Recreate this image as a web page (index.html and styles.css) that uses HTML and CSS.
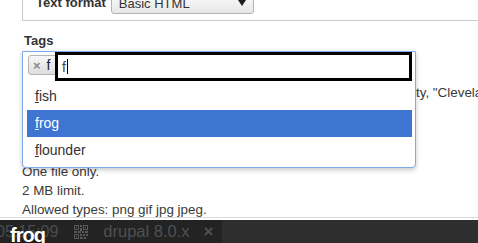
FILE: index.html
```html
<!DOCTYPE html>
<html>
<head>
<meta charset="utf-8">
<link rel="stylesheet" href="styles.css">
</head>
<body>
<div class="page">
  <div class="format">
    <span class="format-label">Text format</span>
    <div class="select"><span class="select-text">Basic HTML</span><span class="select-arrow"></span></div>
  </div>
  <div class="tags-label">Tags</div>
  <div class="widget">
    <div class="chip"><span class="chip-x">×</span><span class="chip-t">f</span></div>
    <div class="input"><span>f</span><span class="caret"></span></div>
    <ul class="suggest">
      <li><u>f</u>ish</li>
      <li class="active"><u>f</u>rog</li>
      <li><u>f</u>lounder</li>
    </ul>
  </div>
  <div class="desc"><span class="desc-hidden">Enter a comma-separated list. For example: Amsterdam, Mexico Ci</span>ty, "Cleveland, Ohio"</div>
  <div class="file-help">
    <div>One file only.</div>
    <div>2 MB limit.</div>
    <div>Allowed types: png gif jpg jpeg.</div>
  </div>
  <div class="sep"></div>
</div>
<div class="taskbar">
  <div class="tab">
    <span class="time">05:15:09</span>
    <svg class="qr" width="14" height="14" viewBox="0 0 14 14">
      <g fill="#595959">
        <rect x="0" y="0" width="5" height="5"/><rect x="9" y="0" width="5" height="5"/><rect x="0" y="9" width="5" height="5"/>
        <rect x="6" y="0" width="2" height="2"/><rect x="6" y="3" width="2" height="3"/><rect x="0" y="6" width="3" height="2"/>
        <rect x="4" y="6" width="3" height="2"/><rect x="8" y="6" width="2" height="2"/><rect x="11" y="6" width="3" height="2"/>
        <rect x="6" y="9" width="2" height="2"/><rect x="9" y="9" width="2" height="2"/><rect x="12" y="9" width="2" height="2"/>
        <rect x="6" y="12" width="3" height="2"/><rect x="10" y="12" width="2" height="2"/>
      </g>
      <g fill="#232323">
        <rect x="1" y="1" width="3" height="3"/><rect x="10" y="1" width="3" height="3"/><rect x="1" y="10" width="3" height="3"/>
      </g>
      <g fill="#595959">
        <rect x="2" y="2" width="1" height="1"/><rect x="11" y="2" width="1" height="1"/><rect x="2" y="11" width="1" height="1"/>
      </g>
    </svg>
    <span class="proj">drupal 8.0.x</span>
    <span class="close">×</span>
  </div>
  <div class="rest"></div>
</div>
<div class="drag">frog</div>
</body>
</html>
```

FILE: styles.css
```css
html, body {
  margin: 0;
  padding: 0;
}
body {
  font-family: "Liberation Sans", Arial, sans-serif;
  color: #333;
  background: #fff;
  width: 478px;
  height: 243px;
  overflow: hidden;
  position: relative;
}
.format {
  margin-left: 22px;
  height: 21px;
  box-sizing: border-box;
  border-left: 1px solid #ccc;
  border-bottom: 1px solid #ccc;
  display: flex;
  align-items: flex-end;
  padding: 0 0 6px 13px;
  gap: 5px;
}
.format-label {
  font-size: 13px;
  font-weight: bold;
  line-height: 15px;
  margin-bottom: 4px;
  color: #333;
}
.select {
  width: 143px;
  height: 22px;
  box-sizing: border-box;
  border: 1px solid #b3b3b3;
  border-radius: 0 0 3px 3px;
  background: linear-gradient(#fefefe, #e6e6e6);
  display: flex;
  align-items: flex-end;
  justify-content: space-between;
  padding: 0 7px 2px 7px;
}
.select-text {
  font-size: 13px;
  line-height: 15px;
  color: #333;
}
.select-arrow {
  width: 0;
  height: 0;
  border-left: 4px solid transparent;
  border-right: 4px solid transparent;
  border-top: 6px solid #1e1e1e;
  margin-bottom: 5px;
}
.tags-label {
  font-size: 13px;
  font-weight: bold;
  line-height: 16px;
  margin: 12px 0 2px 24px;
  color: #333;
}
.widget {
  margin-left: 22px;
  width: 394px;
  height: 30px;
  position: relative;
  display: flex;
  align-items: flex-start;
}
.chip {
  position: relative;
  z-index: 2;
  margin: 4px -3px 0 6px;
  width: 30px;
  height: 20px;
  box-sizing: border-box;
  border: 1px solid #b5b5b5;
  border-radius: 3px;
  background: linear-gradient(#f6f6f6, #dedede);
  display: flex;
  align-items: center;
  padding-left: 4px;
  gap: 6px;
}
.chip-x {
  font-size: 13px;
  font-weight: bold;
  color: #8a8a8a;
}
.chip-t {
  font-size: 14px;
  color: #1c1c30;
}
.input {
  position: relative;
  z-index: 2;
  margin-top: 1px;
  width: 357px;
  height: 29px;
  box-sizing: border-box;
  border: 3px solid #000;
  background: #fff;
  display: flex;
  align-items: center;
  padding-left: 4px;
  font-size: 14px;
  color: #444;
}
.caret {
  width: 1px;
  height: 15px;
  background: #000;
  margin-left: 1px;
}
.suggest {
  position: absolute;
  z-index: 1;
  left: 0;
  top: 0;
  width: 394px;
  height: 117px;
  box-sizing: border-box;
  margin: 0;
  padding: 31px 3px 0 4px;
  list-style: none;
  background: #fff;
  border: 1px solid #7ea9ec;
  border-radius: 0 0 4px 4px;
  box-shadow: 0 2px 5px rgba(0, 0, 0, 0.22);
}
.suggest li {
  height: 27px;
  line-height: 27px;
  padding-left: 8px;
  font-size: 14px;
  color: #333;
}
.suggest li.active {
  background: #3e75d3;
  color: #fff;
}
.desc {
  margin-top: 4px;
  padding-left: 22px;
  font-size: 13.4px;
  line-height: 16px;
  white-space: nowrap;
  overflow: hidden;
  color: #3a3a3a;
}
.desc-hidden {
  display: inline-block;
  width: 394px;
  overflow: hidden;
  white-space: nowrap;
  vertical-align: bottom;
}
.file-help {
  margin-top: 61px;
  padding-left: 22px;
  height: 55px;
  font-size: 13.4px;
  line-height: 19px;
  color: #3a3a3a;
}
.sep {
  height: 1px;
  background: #dadada;
}
.taskbar {
  margin-top: 2px;
  height: 23px;
  display: flex;
}
.tab {
  width: 222px;
  background: #232323;
  display: flex;
  align-items: center;
  overflow: hidden;
  white-space: nowrap;
}
.rest {
  flex: 1;
  background: #2e2e2e;
}
.time {
  margin-left: -4px;
  font-size: 16px;
  color: #4c4c4c;
}
.qr {
  margin-left: 16px;
  flex: none;
}
.proj {
  margin-left: 15px;
  font-size: 16.5px;
  color: #505050;
}
.close {
  margin-left: 14px;
  font-size: 17px;
  font-weight: bold;
  color: #505050;
}
.drag {
  position: absolute;
  z-index: 5;
  left: 10px;
  top: 225px;
  font-size: 20px;
  font-weight: bold;
  line-height: 20px;
  letter-spacing: -1px;
  color: #fff;
  text-shadow: 0 1px 2px rgba(0, 0, 0, 0.6);
}
```
